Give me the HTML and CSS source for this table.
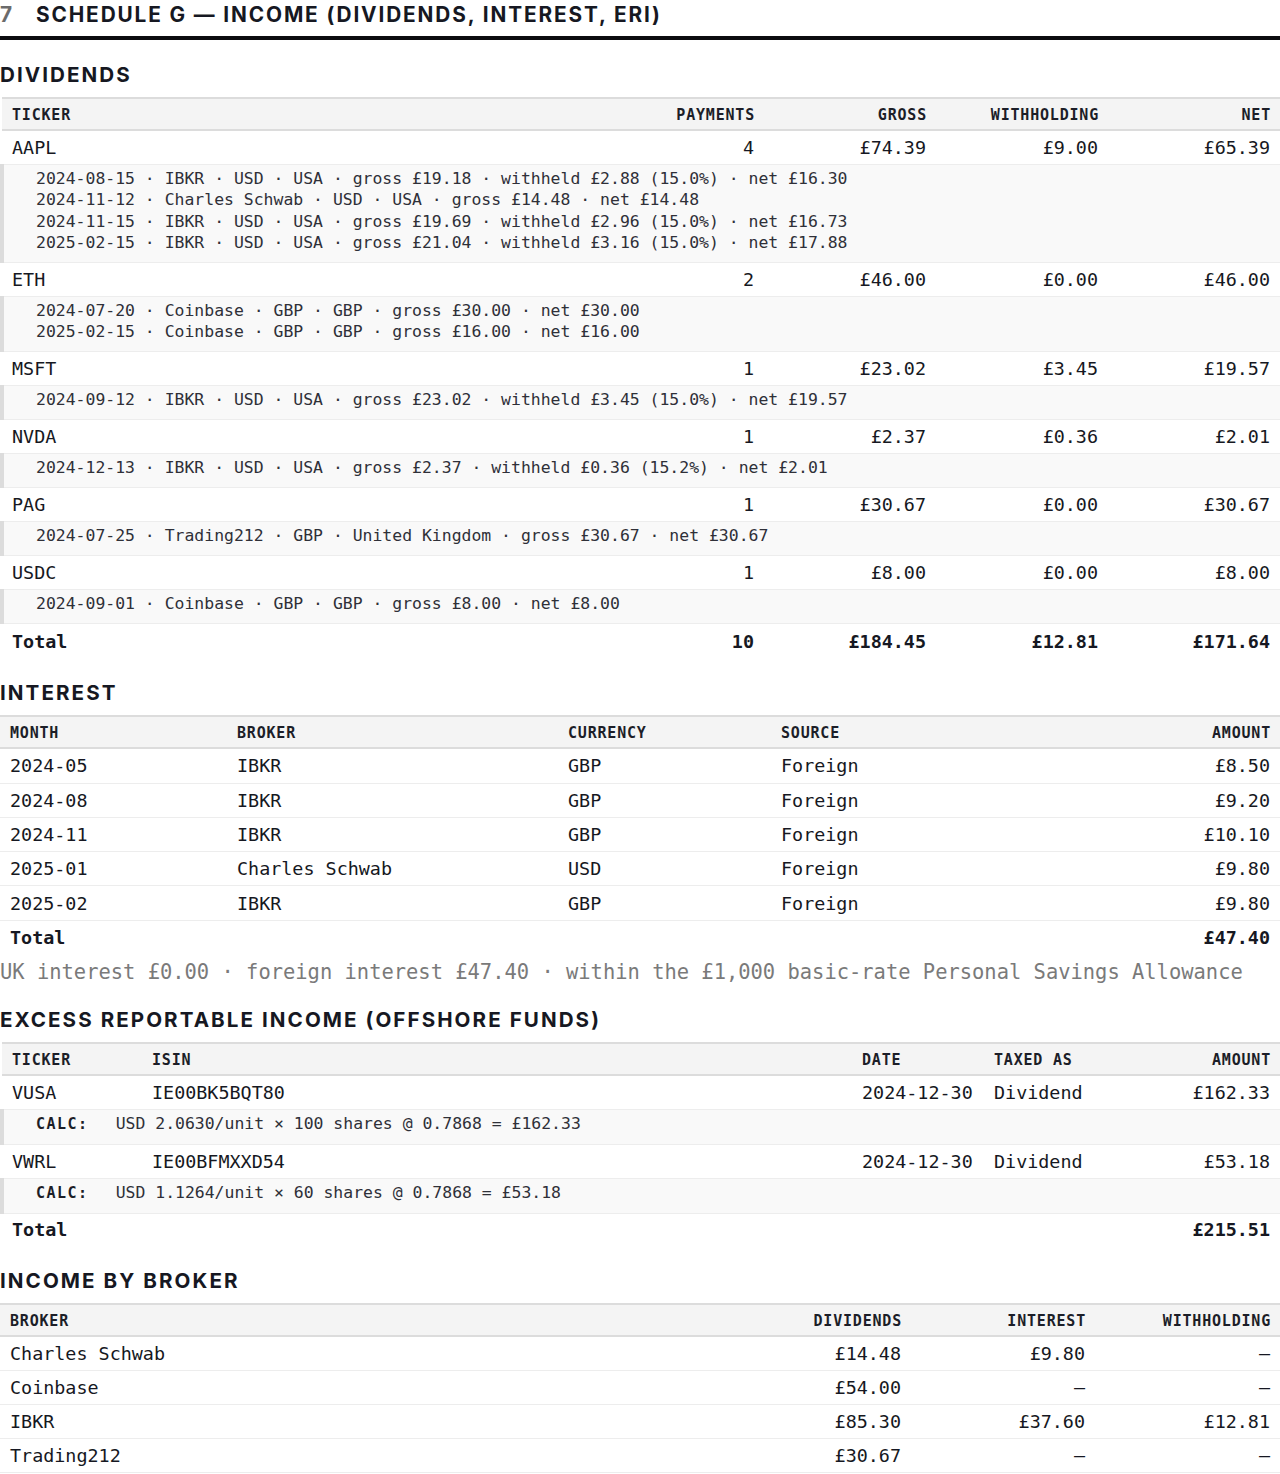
FILE: index.html
```html
<!DOCTYPE html>
<html lang="en">
<head>
<meta charset="utf-8">
<title>Schedule G — Income</title>
<link rel="stylesheet" href="styles.css">
</head>
<body>
<section class="schedule">
  <h2 class="schedule-title"><span class="num">7</span><span>SCHEDULE G — INCOME (DIVIDENDS, INTEREST, ERI)</span></h2>

  <h3 class="sub">DIVIDENDS</h3>
  <table class="tbl tbl-div">
    <colgroup><col><col class="w172"><col class="w172"><col class="w172"><col class="w172"></colgroup>
    <thead>
      <tr><th>Ticker</th><th class="r">Payments</th><th class="r">Gross</th><th class="r">Withholding</th><th class="r">Net</th></tr>
    </thead>
    <tbody>
      <tr class="row"><td>AAPL</td><td class="r">4</td><td class="r">£74.39</td><td class="r">£9.00</td><td class="r">£65.39</td></tr>
      <tr class="detail"><td colspan="5">
        <div>2024-08-15 · IBKR · USD · USA · gross £19.18 · withheld £2.88 (15.0%) · net £16.30</div>
        <div>2024-11-12 · Charles Schwab · USD · USA · gross £14.48 · net £14.48</div>
        <div>2024-11-15 · IBKR · USD · USA · gross £19.69 · withheld £2.96 (15.0%) · net £16.73</div>
        <div>2025-02-15 · IBKR · USD · USA · gross £21.04 · withheld £3.16 (15.0%) · net £17.88</div>
      </td></tr>
      <tr class="row"><td>ETH</td><td class="r">2</td><td class="r">£46.00</td><td class="r">£0.00</td><td class="r">£46.00</td></tr>
      <tr class="detail"><td colspan="5">
        <div>2024-07-20 · Coinbase · GBP · GBP · gross £30.00 · net £30.00</div>
        <div>2025-02-15 · Coinbase · GBP · GBP · gross £16.00 · net £16.00</div>
      </td></tr>
      <tr class="row"><td>MSFT</td><td class="r">1</td><td class="r">£23.02</td><td class="r">£3.45</td><td class="r">£19.57</td></tr>
      <tr class="detail"><td colspan="5">
        <div>2024-09-12 · IBKR · USD · USA · gross £23.02 · withheld £3.45 (15.0%) · net £19.57</div>
      </td></tr>
      <tr class="row"><td>NVDA</td><td class="r">1</td><td class="r">£2.37</td><td class="r">£0.36</td><td class="r">£2.01</td></tr>
      <tr class="detail"><td colspan="5">
        <div>2024-12-13 · IBKR · USD · USA · gross £2.37 · withheld £0.36 (15.2%) · net £2.01</div>
      </td></tr>
      <tr class="row"><td>PAG</td><td class="r">1</td><td class="r">£30.67</td><td class="r">£0.00</td><td class="r">£30.67</td></tr>
      <tr class="detail"><td colspan="5">
        <div>2024-07-25 · Trading212 · GBP · United Kingdom · gross £30.67 · net £30.67</div>
      </td></tr>
      <tr class="row"><td>USDC</td><td class="r">1</td><td class="r">£8.00</td><td class="r">£0.00</td><td class="r">£8.00</td></tr>
      <tr class="detail"><td colspan="5">
        <div>2024-09-01 · Coinbase · GBP · GBP · gross £8.00 · net £8.00</div>
      </td></tr>
      <tr class="total"><td>Total</td><td class="r">10</td><td class="r">£184.45</td><td class="r">£12.81</td><td class="r">£171.64</td></tr>
    </tbody>
  </table>

  <h3 class="sub">INTEREST</h3>
  <table class="tbl tbl-int">
    <colgroup><col class="w227"><col class="w331"><col class="w213"><col class="w213"><col></colgroup>
    <thead>
      <tr><th>Month</th><th>Broker</th><th>Currency</th><th>Source</th><th class="r">Amount</th></tr>
    </thead>
    <tbody>
      <tr class="row"><td>2024-05</td><td>IBKR</td><td>GBP</td><td>Foreign</td><td class="r">£8.50</td></tr>
      <tr class="row"><td>2024-08</td><td>IBKR</td><td>GBP</td><td>Foreign</td><td class="r">£9.20</td></tr>
      <tr class="row"><td>2024-11</td><td>IBKR</td><td>GBP</td><td>Foreign</td><td class="r">£10.10</td></tr>
      <tr class="row"><td>2025-01</td><td>Charles Schwab</td><td>USD</td><td>Foreign</td><td class="r">£9.80</td></tr>
      <tr class="row"><td>2025-02</td><td>IBKR</td><td>GBP</td><td>Foreign</td><td class="r">£9.80</td></tr>
      <tr class="total"><td>Total</td><td></td><td></td><td></td><td class="r">£47.40</td></tr>
    </tbody>
  </table>
  <p class="note">UK interest £0.00 · foreign interest £47.40 · within the £1,000 basic-rate Personal Savings Allowance</p>

  <h3 class="sub">EXCESS REPORTABLE INCOME (OFFSHORE FUNDS)</h3>
  <table class="tbl tbl-eri">
    <colgroup><col class="w140"><col><col class="w132"><col class="w124"><col class="w172"></colgroup>
    <thead>
      <tr><th>Ticker</th><th>ISIN</th><th>Date</th><th>Taxed as</th><th class="r">Amount</th></tr>
    </thead>
    <tbody>
      <tr class="row"><td>VUSA</td><td>IE00BK5BQT80</td><td>2024-12-30</td><td>Dividend</td><td class="r">£162.33</td></tr>
      <tr class="detail"><td colspan="5"><div><span class="calc">CALC:</span>USD 2.0630/unit × 100 shares @ 0.7868 = £162.33</div></td></tr>
      <tr class="row"><td>VWRL</td><td>IE00BFMXXD54</td><td>2024-12-30</td><td>Dividend</td><td class="r">£53.18</td></tr>
      <tr class="detail"><td colspan="5"><div><span class="calc">CALC:</span>USD 1.1264/unit × 60 shares @ 0.7868 = £53.18</div></td></tr>
      <tr class="total"><td>Total</td><td></td><td></td><td></td><td class="r">£215.51</td></tr>
    </tbody>
  </table>

  <h3 class="sub">INCOME BY BROKER</h3>
  <table class="tbl tbl-brk">
    <colgroup><col><col class="w184"><col class="w184"><col class="w185"></colgroup>
    <thead>
      <tr><th>Broker</th><th class="r">Dividends</th><th class="r">Interest</th><th class="r">Withholding</th></tr>
    </thead>
    <tbody>
      <tr class="row"><td>Charles Schwab</td><td class="r">£14.48</td><td class="r">£9.80</td><td class="r">—</td></tr>
      <tr class="row"><td>Coinbase</td><td class="r">£54.00</td><td class="r">—</td><td class="r">—</td></tr>
      <tr class="row"><td>IBKR</td><td class="r">£85.30</td><td class="r">£37.60</td><td class="r">£12.81</td></tr>
      <tr class="row"><td>Trading212</td><td class="r">£30.67</td><td class="r">—</td><td class="r">—</td></tr>
    </tbody>
  </table>
</section>
</body>
</html>
```

FILE: styles.css
```css
html, body {
  margin: 0;
  padding: 0;
  background: #ffffff;
}

body {
  color: #161822;
  font-family: "DejaVu Sans Mono", "Liberation Mono", monospace;
}

.schedule {
  width: 1280px;
}

.schedule-title {
  display: flex;
  gap: 22px;
  margin: 0;
  padding: 0 0 6px 0;
  border-bottom: 4px solid #0c0c10;
  font-family: "Inter", "Liberation Sans", sans-serif;
  font-weight: 700;
  font-size: 20.8px;
  line-height: 30px;
  letter-spacing: 0.09em;
  color: #161822;
}

.schedule-title .num {
  color: #6b6b6b;
}

.sub {
  margin: 23px 0 10px 0;
  font-family: "Inter", "Liberation Sans", sans-serif;
  font-weight: 700;
  font-size: 20.6px;
  line-height: 24px;
  letter-spacing: 0.1em;
  color: #161822;
}

.tbl {
  width: 1280px;
  border-collapse: collapse;
  table-layout: fixed;
}

.w172 { width: 172px; }
.w184 { width: 184px; }
.w185 { width: 185px; }
.w227 { width: 227px; }
.w331 { width: 331px; }
.w213 { width: 213px; }
.w140 { width: 140px; }
.w132 { width: 132px; }
.w124 { width: 124px; }

.tbl th {
  background: #f4f4f4;
  border-top: 2px solid #dcdcdc;
  border-bottom: 2px solid #dcdcdc;
  height: 28px;
  padding: 2px 10px 0 10px;
  text-align: left;
  font-size: 15px;
  font-weight: 700;
  letter-spacing: 0.8px;
  text-transform: uppercase;
  color: #1c1e28;
}

.tbl td {
  padding: 0 10px;
  height: 33px;
  font-size: 18.4px;
  white-space: nowrap;
}

.tbl-int td {
  height: 33.3px;
}

.tbl th.r,
.tbl td.r {
  text-align: right;
}

.tbl th.r {
  padding-right: 9px;
}

.tbl .row td {
  border-bottom: 1px solid #ededed;
}

.tbl .detail td {
  background: #f9f9f9;
  border-left: 4px solid #dcdcdc;
  border-bottom: 1px solid #ededed;
  padding: 3px 0 8.67px 32px;
  height: auto;
  font-size: 16.45px;
  line-height: 21.33px;
  color: #2f3038;
}

.calc {
  margin-right: 27px;
  font-weight: 700;
  font-size: 15px;
  letter-spacing: 1.5px;
  color: #1c1e28;
}

.tbl .total td {
  font-weight: 700;
  height: 34px;
}

.tbl-eri .total td {
  height: 32px;
}

.note {
  margin: 4px 0 23px 0;
  font-size: 20.45px;
  line-height: 26px;
  color: #7a7a7a;
  white-space: nowrap;
}
```
